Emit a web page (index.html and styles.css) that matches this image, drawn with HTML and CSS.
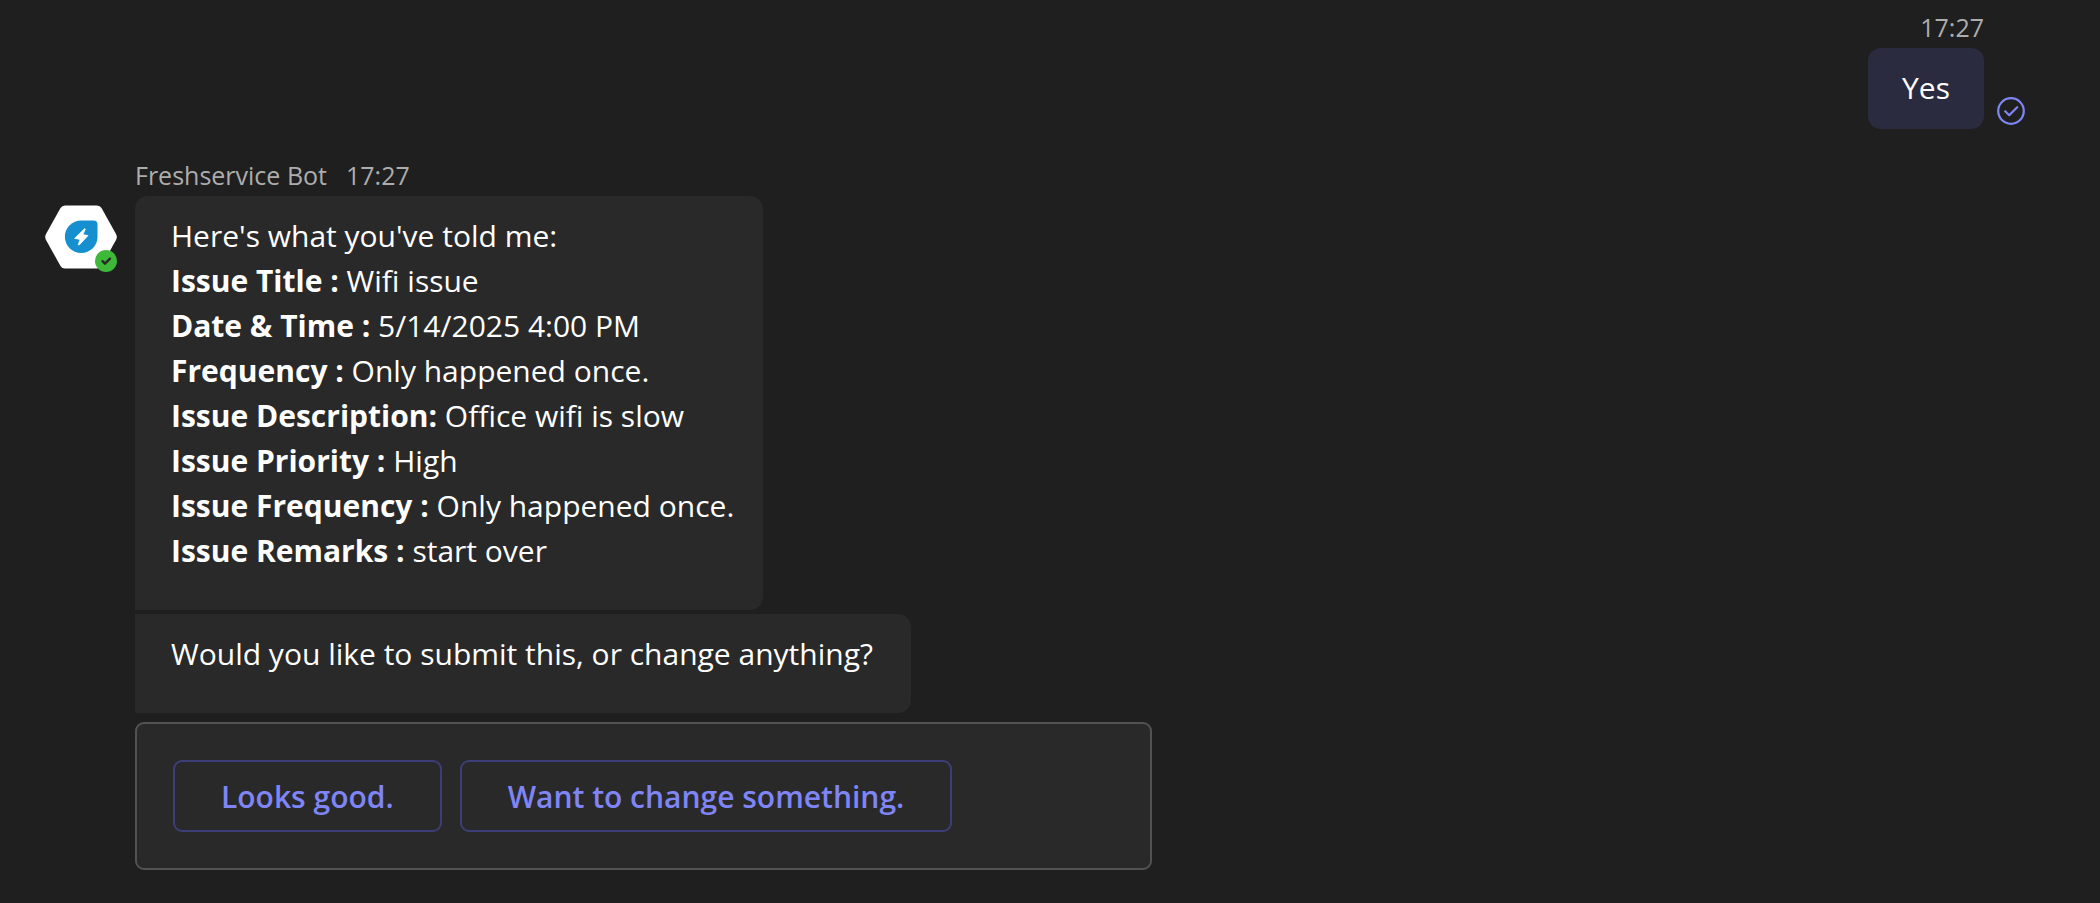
FILE: index.html
```html
<!DOCTYPE html>
<html lang="en">
<head>
    <meta charset="UTF-8">
    <meta name="viewport" content="width=device-width, initial-scale=1.0">
    <title>Freshservice Bot</title>
    <link rel="stylesheet" href="styles.css">
</head>
<body>
    <main class="chat">
        <!-- Own message -->
        <section class="message mine">
            <div class="content">
                <div class="meta"><time>17:27</time></div>
                <p class="bubble">Yes</p>
            </div>
            <svg class="status" viewBox="0 0 28 28" role="img" aria-label="Sent">
                <circle cx="14" cy="14" r="12.8"/>
                <path d="M8.2 14.2l4 4 8-8"/>
            </svg>
        </section>

        <!-- Bot message -->
        <section class="message bot">
            <div class="avatar">
                <svg class="logo" viewBox="0 0 72 64" aria-hidden="true">
                    <path fill="#fff" d="M20 .5h32q3 0 4.500 2.500l14.500 26q1.600 3 0 6l-14.500 26q-1.500 2.500-4.500 2.500h-32q-3 0-4.500-2.500l-14.500-26q-1.600-3 0-6l14.500-26q1.500-2.500 4.500-2.500z"/>
                    <path fill="#158fd0" d="M36.200 15.500h12.300q4 0 4 4v12.300a16.300 16.300 0 1 1-16.300-16.300z"/>
                    <path fill="#fff" stroke="#fff" stroke-width=".8" stroke-linejoin="round" d="M39.500 23.800L29.600 33.400l5.600 1-2 5.400 1 .2L43 30.600l-5.200-1 2.600-5.500z"/>
                </svg>
                <svg class="presence" viewBox="0 0 22 22" role="img" aria-label="Available">
                    <circle cx="11" cy="11" r="11" fill="#3db838"/>
                    <path d="M7.500 11.200l2.500 2.500 5-5"/>
                </svg>
            </div>
            <div class="content">
                <div class="meta"><span>Freshservice Bot</span><time>17:27</time></div>
                <div class="bubble first">
                    <p>Here's what you've told me:</p>
                    <p><b>Issue Title :</b> Wifi issue</p>
                    <p><b>Date &amp; Time :</b> 5/14/2025 4:00 PM</p>
                    <p><b>Frequency :</b> Only happened once.</p>
                    <p><b>Issue Description:</b> Office wifi is slow</p>
                    <p><b>Issue Priority :</b> High</p>
                    <p><b>Issue Frequency :</b> Only happened once.</p>
                    <p><b>Issue Remarks :</b> start over</p>
                </div>
                <div class="bubble">
                    <p>Would you like to submit this, or change anything?</p>
                </div>
                <div class="card">
                    <button type="button">Looks good.</button>
                    <button type="button">Want to change something.</button>
                </div>
            </div>
        </section>
    </main>
</body>
</html>
```
FILE: styles.css
```css
* {
    box-sizing: border-box;
}
body {
    margin: 0;
    background-color: #1f1f1f;
    color: #fff;
    font-family: "Segoe UI", "Open Sans", "Noto Sans", sans-serif;
    font-size: 30px;
    line-height: 45px;
}
p {
    margin: 0;
}
.chat {
    padding: 12px 75px 33px 45px;
}
.message {
    display: flex;
}
.mine {
    justify-content: flex-end;
    align-items: flex-end;
    gap: 13px;
}
.meta {
    display: flex;
    gap: 19px;
    height: 36px;
    color: #adadad;
    font-size: 25px;
    line-height: 30px;
}
.mine .meta {
    justify-content: flex-end;
}
.mine .bubble {
    padding: 17px 34px 19px;
    border-radius: 13px;
    background-color: #2b2b40;
}
.status {
    width: 28px;
    height: 28px;
    margin-bottom: 4px;
}
.status circle,
.status path {
    fill: none;
    stroke: #7f85f5;
    stroke-width: 2.2;
    stroke-linecap: round;
    stroke-linejoin: round;
}
.bot {
    gap: 18px;
    margin-top: 31px;
}
.bot .content {
    flex: 1;
    min-width: 0;
}
.avatar {
    position: relative;
    width: 72px;
    height: 64px;
    margin-top: 45px;
}
.logo {
    display: block;
    width: 72px;
    height: 64px;
}
.presence {
    position: absolute;
    right: 0;
    bottom: -3px;
    width: 22px;
    height: 22px;
}
.presence path {
    fill: none;
    stroke: #292929;
    stroke-width: 2.4;
    stroke-linecap: round;
    stroke-linejoin: round;
}
.bot .bubble {
    width: fit-content;
    max-width: 100%;
    margin-bottom: 4px;
    padding: 17px 38px 37px 36px;
    border-radius: 0 13px 13px 0;
    background-color: #292929;
}
.bot .first {
    padding-right: 29px;
    border-top-left-radius: 13px;
}
.card {
    display: flex;
    flex-wrap: wrap;
    gap: 18px;
    max-width: 1017px;
    margin-top: 9px;
    padding: 36px;
    border: 2px solid #525252;
    border-radius: 9px;
    background-color: #292929;
}
.card button {
    padding: 12px 46px 11px;
    border: 2px solid #3d3e78;
    border-radius: 9px;
    background-color: transparent;
    color: #7f85f5;
    font-family: inherit;
    font-size: 30px;
    font-weight: 600;
    line-height: 45px;
    cursor: pointer;
}
.card button:hover {
    background-color: #2f2f4a;
}
```
